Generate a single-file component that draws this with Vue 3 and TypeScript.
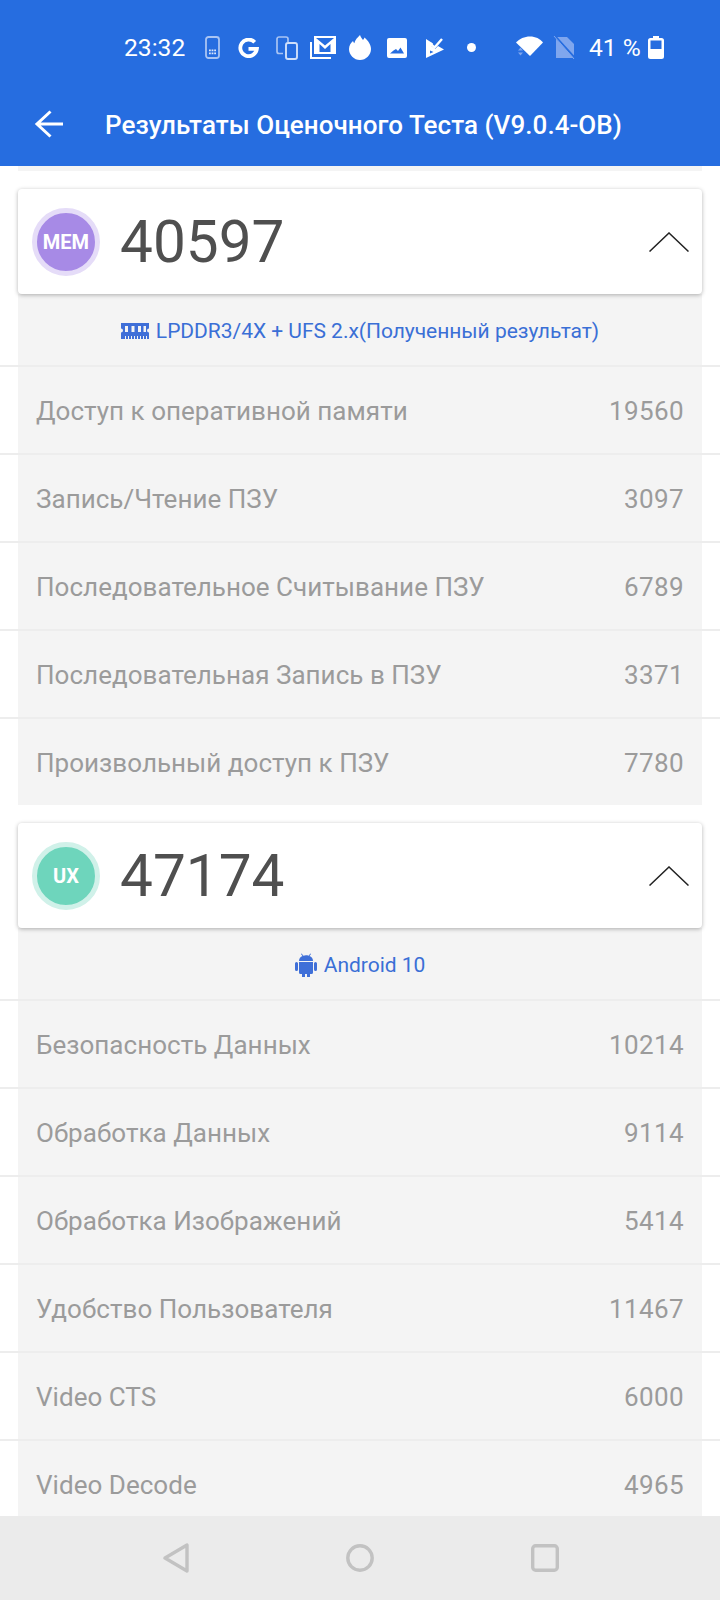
<script setup lang="ts">
interface Row {
  label: string;
  value: number;
}

interface Section {
  code: string;
  score: number;
  info: string;
  kind: string;
  rows: Row[];
}

const sections: Section[] = [
  {
    code: 'MEM',
    score: 40597,
    info: 'LPDDR3/4X + UFS 2.x(Полученный результат)',
    kind: 'mem',
    rows: [
      { label: 'Доступ к оперативной памяти', value: 19560 },
      { label: 'Запись/Чтение ПЗУ', value: 3097 },
      { label: 'Последовательное Считывание ПЗУ', value: 6789 },
      { label: 'Последовательная Запись в ПЗУ', value: 3371 },
      { label: 'Произвольный доступ к ПЗУ', value: 7780 },
    ],
  },
  {
    code: 'UX',
    score: 47174,
    info: 'Android 10',
    kind: 'ux',
    rows: [
      { label: 'Безопасность Данных', value: 10214 },
      { label: 'Обработка Данных', value: 9114 },
      { label: 'Обработка Изображений', value: 5414 },
      { label: 'Удобство Пользователя', value: 11467 },
      { label: 'Video CTS', value: 6000 },
      { label: 'Video Decode', value: 4965 },
    ],
  },
];
</script>

<template>
  <div class="screen">
    <header class="appbar">
      <div class="status">
        <span class="time">23:32</span>
        <svg class="st-icon" width="15" height="23" viewBox="0 0 15 23">
          <rect x="1" y="1" width="13" height="21" rx="2.500" fill="none" stroke="#a9c4f3" stroke-width="1.800" />
          <path d="M4 13.500h1.800v1.700H4zM6.600 13.500h1.800v1.700H6.600zM9.200 13.500h1.800v1.700H9.200zM4 16.500h1.800v1.700H4zM6.600 16.500h1.800v1.700H6.600zM9.200 16.500h1.800v1.700H9.200z" fill="#dce7fb" />
        </svg>
        <svg class="st-icon g" width="22" height="20" viewBox="0 0 22 20">
          <path d="M16.700 4.200A8.300 8.300 0 1 0 18.900 10.800H10.500" fill="none" stroke="#fff" stroke-width="3.800" />
        </svg>
        <svg class="st-icon copy" width="22" height="24" viewBox="0 0 22 24">
          <path d="M7 17.500H3a2 2 0 0 1-2-2V3a2 2 0 0 1 2-2h7a2 2 0 0 1 2 2v3" fill="none" stroke="#a9c4f3" stroke-width="1.700" />
          <rect x="10" y="7" width="11" height="16" rx="2" fill="none" stroke="#cfdffa" stroke-width="1.900" />
        </svg>
        <svg class="st-icon mail" width="26" height="23" viewBox="0 0 26 23">
          <path d="M1 6v16h20" fill="none" stroke="#fff" stroke-width="2" />
          <rect x="5" y="1" width="20" height="16" fill="none" stroke="#fff" stroke-width="2" />
          <path d="M6 2l9 7.500L24 2v15h-3.500V8L15 13 9.500 8v9H6z" fill="#fff" />
        </svg>
        <svg class="st-icon flame" width="22" height="25" viewBox="0 0 22 25">
          <path d="M11 0c1 2.500 2 3.500 3 5 .8-.8 1.300-1.500 1.500-2.500C19 5.500 22 9.500 22 14c0 6-5 11-11 11S0 20 0 14c0-3.500 2-6.500 4-8 .3 1 .7 1.600 1.300 2.200C6 5 8.500 2.500 11 0z" fill="#fff" />
        </svg>
        <svg class="st-icon pic" width="20" height="20" viewBox="0 0 20 20">
          <path fill-rule="evenodd" d="M2 0h16a2 2 0 0 1 2 2v16a2 2 0 0 1-2 2H2a2 2 0 0 1-2-2V2a2 2 0 0 1 2-2zM3 15.500h14l-3.500-6-2.500 3.500-2-2-2.500 1.500z" fill="#fff" />
        </svg>
        <svg class="st-icon check" width="18" height="20" viewBox="0 0 18 20">
          <path d="M0 1l7 4.500-1.500 2.500L9 11l3-3 6 3.500L0 20z" fill="#fff" />
          <path d="M4 5l4.500 4.500L16 1" fill="none" stroke="#fff" stroke-width="2.400" />
          <path d="M4 12.500l3.500 1.500-3.500 1.500z" fill="#266de0" />
        </svg>
        <span class="dot"></span>
        <svg class="st-icon wifi" width="27" height="24" viewBox="0 0 27 24">
          <path d="M0 6.500C3.500 2.800 8.500 0.500 14 0.500s10 2.300 13 6L14 20z" fill="#fff" />
          <path d="M2 14.500l2.500-3 2.500 3zM2 16.500h5l-2.500 3z" fill="#7fa6ee" />
        </svg>
        <svg class="st-icon sim" width="22" height="24" viewBox="0 0 22 24">
          <path d="M3 1h11l7 7v14H3z" fill="#7fa6ee" />
          <path d="M2 0l20 22" stroke="#266de0" stroke-width="2" />
          <path d="M1 0l20 23" stroke="#7fa6ee" stroke-width="1" />
        </svg>
        <span class="batt">41 %</span>
        <svg class="st-icon battery" width="16" height="23" viewBox="0 0 16 23">
          <path d="M5 0h6v2h2.500A2.500 2.500 0 0 1 16 4.500v16a2.500 2.500 0 0 1-2.500 2.500h-11A2.500 2.500 0 0 1 0 20.500v-16A2.500 2.500 0 0 1 2.500 2H5z" fill="#fff" />
          <rect x="2.500" y="4.500" width="11" height="8.500" fill="#266de0" />
        </svg>
      </div>
      <div class="titlebar">
        <svg class="back" width="30" height="28" viewBox="0 0 30 28">
          <path d="M29 14H3M16.500 1.500L3 14l13.500 12.500" fill="none" stroke="#fff" stroke-width="3" />
        </svg>
        <h1>Результаты Оценочного Теста (V9.0.4-OB)</h1>
      </div>
    </header>

    <main class="content">
      <div class="top-strip"></div>
      <section v-for="s in sections" :key="s.code" class="section">
        <div class="score-card">
          <div class="badge" :class="s.kind">{{ s.code }}</div>
          <div class="score">{{ s.score }}</div>
          <svg class="chevron" width="40" height="20" viewBox="0 0 40 20">
            <path d="M0.500 19.500L20 1l19.500 18.500" fill="none" stroke="#222" stroke-width="1.500" />
          </svg>
        </div>
        <div class="info">
          <svg v-if="s.kind === 'mem'" width="28" height="16" viewBox="0 0 28 16">
            <path d="M0 0h28v5.500a2 2 0 0 0 0 4V16H26v-3h-1v3h-2v-3h-1v3h-2v-3h-1v3h-2v-3h-1v3h-2v-3h-1v3H11v-3h-1v3H8v-3H7v3H5v-3H4v3H0V9.500a2 2 0 0 0 0-4zM4 3v6h3V3zM10.500 3v6h3V3zM17 3v6h3V3zM22.500 3v6h2.500V3z" fill="#3f6fd8" fill-rule="evenodd" />
          </svg>
          <svg v-else class="droid" width="22" height="24" viewBox="0 0 22 24">
            <path d="M4 9h14v10.500a1.500 1.500 0 0 1-1.500 1.500H15v2.500a1.500 1.500 0 0 1-3 0V21h-2v2.500a1.500 1.500 0 0 1-3 0V21H5.500A1.500 1.500 0 0 1 4 19.500zM1.500 9A1.500 1.500 0 0 1 3 10.500v6a1.500 1.500 0 0 1-3 0v-6A1.500 1.500 0 0 1 1.500 9zM20.500 9a1.500 1.500 0 0 1 1.500 1.500v6a1.500 1.500 0 0 1-3 0v-6A1.500 1.500 0 0 1 20.500 9zM4 8c0-2.500 1.500-4.200 3.500-5L6 1l.6-.5 1.800 2.200A8 8 0 0 1 11 2.300c1 0 1.800.1 2.600.4L15.400.5 16 1l-1.500 2C16.500 3.800 18 5.500 18 8z" fill="#3f6fd8" />
          </svg>
          <span>{{ s.info }}</span>
        </div>
        <div v-for="r in s.rows" :key="r.label" class="row">
          <div class="row-inner">
            <span class="label">{{ r.label }}</span>
            <span class="value">{{ r.value }}</span>
          </div>
        </div>
      </section>
    </main>

    <nav class="navbar">
      <svg width="26" height="30" viewBox="0 0 26 30">
        <path d="M24 2v26L2 15z" fill="none" stroke="#c2c2c2" stroke-width="3.400" stroke-linejoin="round" />
      </svg>
      <svg width="28" height="28" viewBox="0 0 28 28">
        <circle cx="14" cy="14" r="12.200" fill="none" stroke="#c2c2c2" stroke-width="3.400" />
      </svg>
      <svg width="28" height="28" viewBox="0 0 28 28">
        <rect x="1.700" y="1.700" width="24.600" height="24.600" rx="3" fill="none" stroke="#c2c2c2" stroke-width="3.400" />
      </svg>
    </nav>
  </div>
</template>

<style>
html,
body {
  margin: 0;
  background: #fff;
}
</style>

<style scoped>
.screen {
  width: 720px;
  height: 1600px;
  display: flex;
  flex-direction: column;
  overflow: hidden;
  font-family: Roboto, "Liberation Sans", sans-serif;
  background: #fff;
}

.appbar {
  height: 166px;
  flex-shrink: 0;
  background: #266de0;
  color: #fff;
}

.status {
  height: 96px;
  display: flex;
  align-items: center;
  padding-left: 124px;
  box-sizing: border-box;
  padding-bottom: 1px;
}

.time {
  font-size: 24.6px;
  width: 81px;
}

.st-icon {
  flex-shrink: 0;
}

.g {
  margin-left: 18px;
}

.copy {
  margin-left: 16px;
}

.mail {
  margin-left: 12px;
}

.flame {
  margin-left: 13px;
}

.pic {
  margin-left: 16px;
}

.check {
  margin-left: 19px;
}

.dot {
  width: 9px;
  height: 9px;
  border-radius: 50%;
  background: #fff;
  margin-left: 23px;
}

.wifi {
  margin-left: 40px;
}

.sim {
  margin-left: 10px;
}

.batt {
  font-size: 24.6px;
  margin-left: 14px;
  width: 59px;
}

.titlebar {
  height: 56px;
  display: flex;
  align-items: center;
  padding-left: 34px;
}

.back {
  flex-shrink: 0;
}

h1 {
  margin: 2px 0 0 41px;
  font-size: 26px;
  font-weight: 500;
  letter-spacing: 0.05px;
  white-space: nowrap;
}

.content {
  flex: 1;
  min-height: 0;
  overflow: hidden;
}

.top-strip {
  height: 5px;
  margin: 0 18px;
  background: #f4f4f4;
}

.section {
  margin-top: 18px;
}

.score-card {
  position: relative;
  height: 105px;
  margin: 0 18px;
  display: flex;
  align-items: center;
  background: #fff;
  border-radius: 4px;
  box-shadow: 0 1px 4px rgba(0, 0, 0, 0.3);
  padding: 0 13px 0 14px;
  box-sizing: border-box;
}

.badge {
  width: 68px;
  height: 68px;
  box-sizing: border-box;
  border-radius: 50%;
  display: flex;
  align-items: center;
  justify-content: center;
  color: #fff;
  font-size: 20px;
  font-weight: 700;
  flex-shrink: 0;
}

.badge.mem {
  background: #a78ae6;
  border: 5px solid #e5dcf8;
}

.badge.ux {
  background: #6ed5bc;
  border: 5px solid #d0f1e9;
}

.score {
  margin-left: 20px;
  font-size: 58.5px;
  color: #4f4f4f;
  flex: 1;
}

.chevron {
  flex-shrink: 0;
}

.info {
  height: 71px;
  margin: 0 18px;
  padding-top: 2px;
  box-sizing: border-box;
  background: #f4f4f4;
  display: flex;
  align-items: center;
  justify-content: center;
  gap: 7px;
  font-size: 21px;
  color: #3a6fd6;
}

.info span {
  letter-spacing: -0.03px;
}

.row {
  height: 88px;
  border-top: 2px solid #ededed;
  box-sizing: border-box;
}

.row-inner {
  height: 100%;
  margin: 0 18px;
  padding: 2px 18px 0;
  box-sizing: border-box;
  background: #f4f4f4;
  display: flex;
  align-items: center;
  justify-content: space-between;
  font-size: 26px;
  color: #9b9b9b;
}

.label {
  letter-spacing: 0.03px;
}

.value {
  letter-spacing: 0.4px;
}

.navbar {
  height: 84px;
  flex-shrink: 0;
  background: #ebebeb;
  display: flex;
  align-items: center;
  gap: 157px;
  padding-left: 163px;
  box-sizing: border-box;
}
</style>
